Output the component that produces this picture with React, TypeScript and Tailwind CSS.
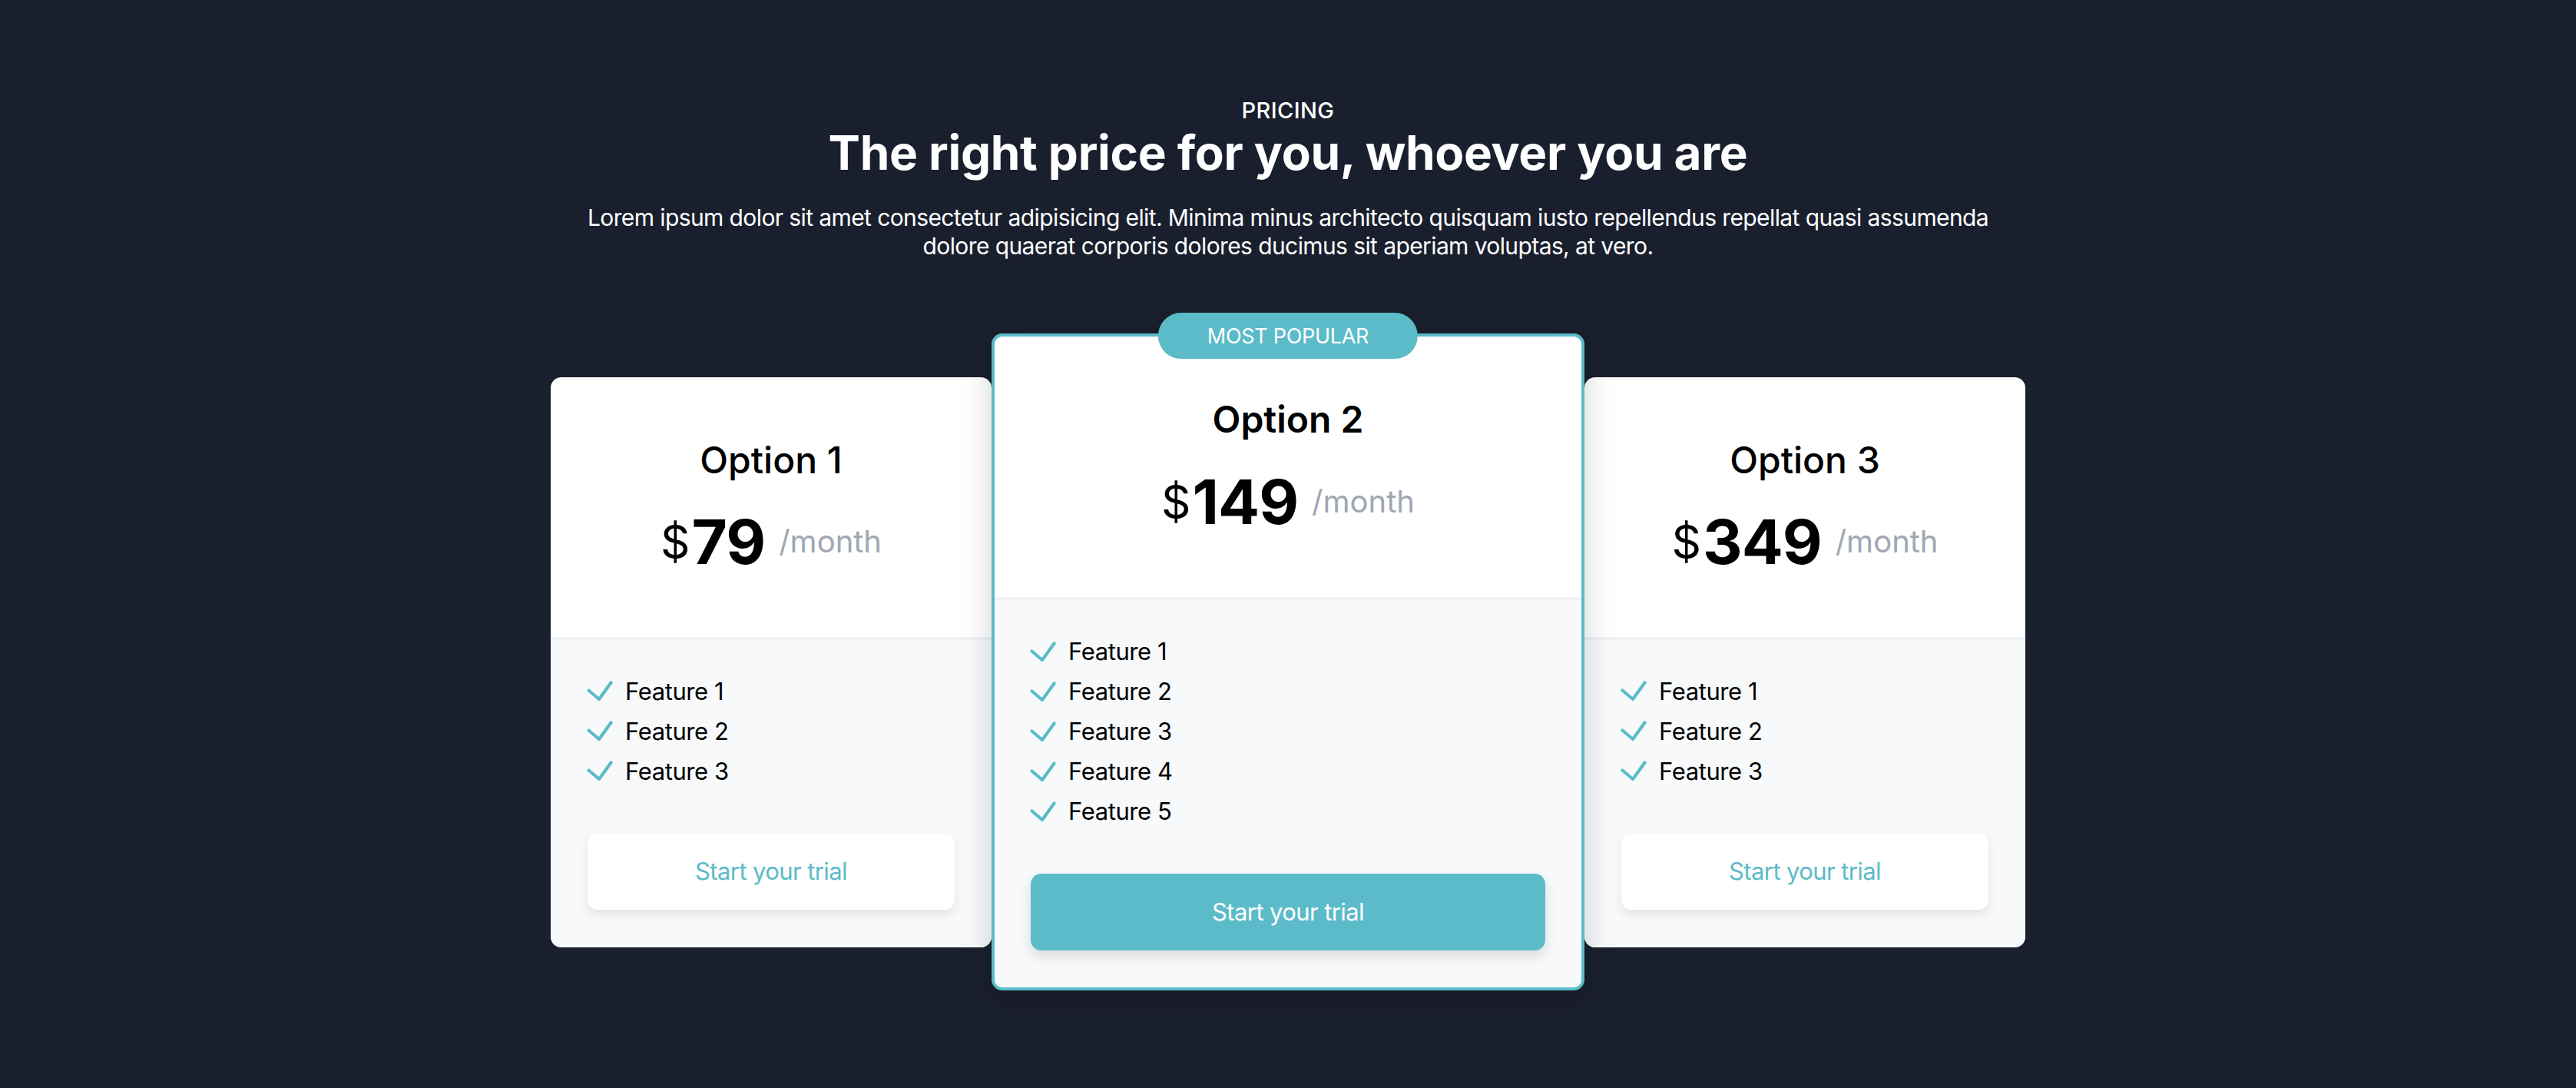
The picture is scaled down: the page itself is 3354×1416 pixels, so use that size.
import React from "react";

const ACCENT = "#5bbbc8";

function Check() {
  return (
    <svg width="34" height="27" viewBox="0 0 34 27" fill="none" className="shrink-0">
      <path d="M2.5 12.5 L16 24 L31.5 2.5" stroke={ACCENT} strokeWidth="4.2" strokeLinecap="round" strokeLinejoin="round" />
    </svg>
  );
}

function Features({ items }: { items: string[] }) {
  return (
    <ul className="flex flex-col">
      {items.map((f) => (
        <li key={f} className="flex items-center h-[52px] text-[31px] leading-[52px] tracking-[-0.4px] text-black">
          <span className="-ml-[1px] mr-[16px] flex items-center"><Check /></span>
          <span>{f}</span>
        </li>
      ))}
    </ul>
  );
}

function Price({ amount }: { amount: string }) {
  return (
    <div className="flex items-center justify-center leading-none">
      <span className="text-[60px] font-normal text-black leading-none mr-[2px]">$</span>
      <span className="text-[80px] font-bold text-black leading-none tracking-[-1px]">{amount}</span>
      <span className="text-[40px] text-[#a0a7b4] leading-none ml-[18px]">/month</span>
    </div>
  );
}

function SideCard({ title, amount }: { title: string; amount: string }) {
  return (
    <div className="w-[574px] rounded-[14px] bg-white overflow-hidden flex flex-col">
      <div className="pt-[84px] pb-[84px] flex flex-col items-center">
        <div className="text-[48px] leading-none font-medium text-black">{title}</div>
        <div className="mt-[42px]">
          <Price amount={amount} />
        </div>
      </div>
      <div className="border-t-4 border-[#eef1f5] bg-[#f7f9fb] px-[48px] pt-[41px] pb-[49px]">
        <Features items={["Feature 1", "Feature 2", "Feature 3"]} />
        <button className="mt-[55px] w-full h-[99px] rounded-[13px] bg-white text-[31px] tracking-[-0.6px] text-[#5bbbc8] shadow-[0_6px_14px_rgba(0,0,0,0.09)]">
          Start your trial
        </button>
      </div>
    </div>
  );
}

function MainCard() {
  return (
    <div className="relative z-10 w-[772px] rounded-[14px] border-4 border-[#5bbbc8] bg-white shadow-[0_10px_40px_rgba(0,0,0,0.18)] flex flex-col">
      <div className="absolute left-1/2 top-[-31px] -translate-x-1/2 h-[60px] px-[64px] rounded-full bg-[#5bbbc8] flex items-center justify-center text-white text-[27px] tracking-[-0.3px] leading-none whitespace-nowrap">
        MOST POPULAR
      </div>
      <div className="pt-[84px] pb-[84px] flex flex-col items-center rounded-t-[10px]">
        <div className="text-[48px] leading-none font-semibold text-black">Option 2</div>
        <div className="mt-[43px]">
          <Price amount="149" />
        </div>
      </div>
      <div className="border-t-4 border-[#eef1f5] bg-[#f7f9fb] px-[47px] pt-[41px] pb-[48px] rounded-b-[10px]">
        <Features items={["Feature 1", "Feature 2", "Feature 3", "Feature 4", "Feature 5"]} />
        <button className="mt-[55px] w-full h-[100px] rounded-[14px] bg-[#5bbbc8] text-[31px] tracking-[-0.6px] text-white shadow-[0_8px_16px_rgba(0,0,0,0.12)]">
          Start your trial
        </button>
      </div>
    </div>
  );
}

export default function App() {
  return (
    <div
      className="min-h-[1416px] w-full bg-[#1a1f2e] flex flex-col items-center"
      style={{ fontFamily: "Inter, 'Noto Sans', 'Liberation Sans', sans-serif" }}
    >
      <div className="pt-[129px] flex flex-col items-center text-white text-center">
        <div className="text-[29px] leading-none font-medium tracking-[0.4px]">PRICING</div>
        <h1 className="mt-[10px] text-[62px] leading-none font-bold tracking-[-0.3px]">
          The right price for you, whoever you are
        </h1>
        <p className="mt-[35px] text-[30px] leading-[37px] tracking-[-0.6px]">
          Lorem ipsum dolor sit amet consectetur adipisicing elit. Minima minus architecto quisquam iusto repellendus repellat quasi assumenda
          <br />
          dolore quaerat corporis dolores ducimus sit aperiam voluptas, at vero.
        </p>
      </div>
      <div className="mt-[95px] flex items-center">
        <SideCard title="Option 1" amount="79" />
        <MainCard />
        <SideCard title="Option 3" amount="349" />
      </div>
    </div>
  );
}
